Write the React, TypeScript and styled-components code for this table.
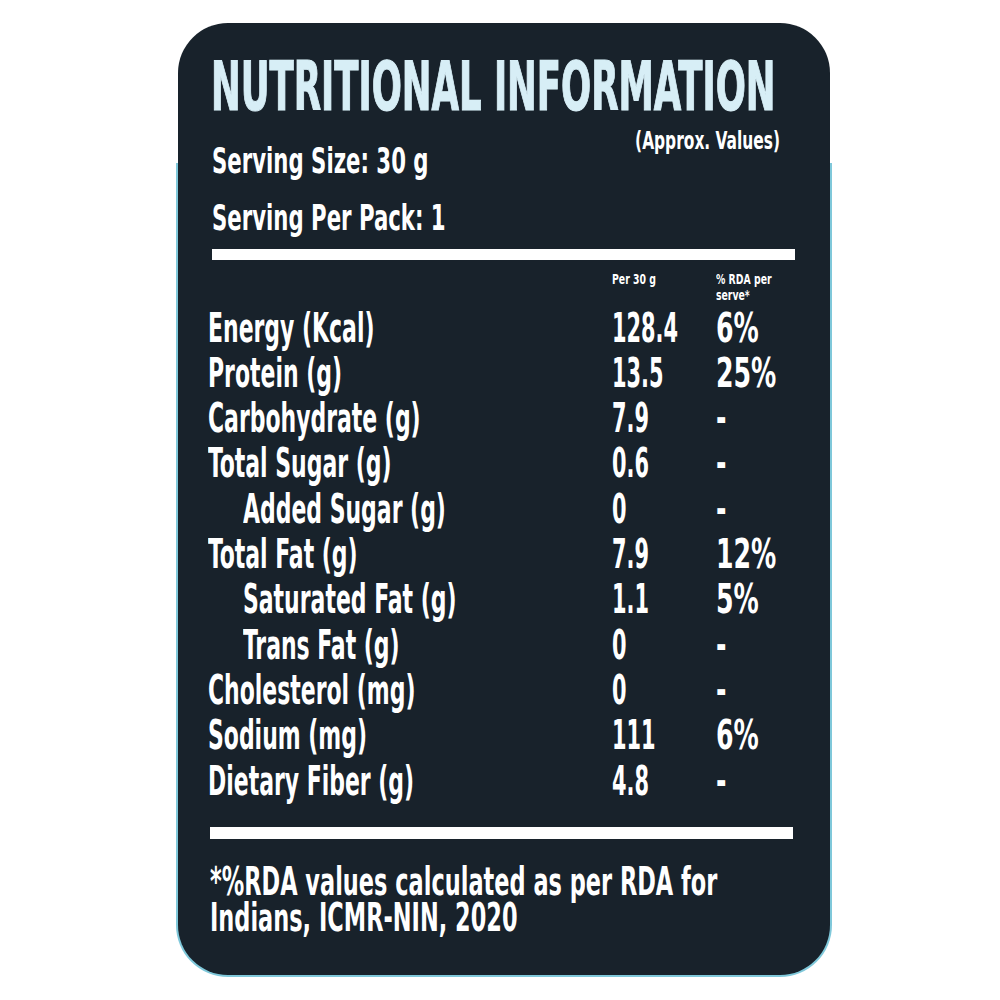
import React from "react";
import styled, {createGlobalStyle} from "styled-components";

const GlobalStyle = createGlobalStyle`
  html, body {
    margin: 0;
    padding: 0;
    background: #ffffff;
  }
`;

type Nutrient = {
    label: string;
    amount: string;
    rda: string;
    indent?: boolean;
};

const nutrients: Nutrient[] = [
    {label: "Energy (Kcal)", amount: "128.4", rda: "6%"},
    {label: "Protein (g)", amount: "13.5", rda: "25%"},
    {label: "Carbohydrate (g)", amount: "7.9", rda: "-"},
    {label: "Total Sugar (g)", amount: "0.6", rda: "-"},
    {label: "Added Sugar (g)", amount: "0", rda: "-", indent: true},
    {label: "Total Fat (g)", amount: "7.9", rda: "12%"},
    {label: "Saturated Fat (g)", amount: "1.1", rda: "5%", indent: true},
    {label: "Trans Fat (g)", amount: "0", rda: "-", indent: true},
    {label: "Cholesterol (mg)", amount: "0", rda: "-"},
    {label: "Sodium (mg)", amount: "111", rda: "6%"},
    {label: "Dietary Fiber (g)", amount: "4.8", rda: "-"},
];

export default function App() {
    return (
        <Page>
            <GlobalStyle />
            <Frame>
                <Card>
                    <Title>NUTRITIONAL INFORMATION</Title>
                    <Header>
                        <Serving>
                            <ServingLine>Serving Size: 30 g</ServingLine>
                            <ServingLine $gap>Serving Per Pack: 1</ServingLine>
                        </Serving>
                        <Approx>(Approx. Values)</Approx>
                    </Header>
                    <Rule $height={11} $inset={4} $right={0} $top={12.6} />
                    <TableHead>
                        <span />
                        <HeadCell>Per 30 g</HeadCell>
                        <HeadCell>% RDA per<br />serve*</HeadCell>
                    </TableHead>
                    <Table>
                        {nutrients.map(n => (
                            <Row key={n.label}>
                                <Label $indent={n.indent}>{n.label}</Label>
                                <Cell $squeeze={0.58}>{n.amount}</Cell>
                                <Cell $squeeze={0.7}>{n.rda}</Cell>
                            </Row>
                        ))}
                    </Table>
                    <Rule $height={12} $inset={2} $right={2} $top={23.4} />
                    <Footnote>
                        <FootLine>*%RDA values calculated as per RDA for</FootLine>
                        <FootLine>Indians, ICMR-NIN, 2020</FootLine>
                    </Footnote>
                </Card>
            </Frame>
        </Page>
    );
}

const condensed = `"DejaVu Sans Condensed", "DejaVu Sans", "Liberation Sans", sans-serif`;

const Page = styled.div`
  width: 1000px;
  height: 1000px;
  box-sizing: border-box;
  padding: 23px 0 0 176px;
`;

const Frame = styled.div`
  width: 656px;
  box-sizing: border-box;
  padding: 0 2px 2px;
  border-radius: 52px;
  background: linear-gradient(to bottom, transparent 140px, #7fc8da 140px);
`;

const Card = styled.div`
  width: 652px;
  height: 952px;
  box-sizing: border-box;
  padding: 30px 35px 0 30px;
  border-radius: 50px;
  background: #18222b;
  color: #ffffff;
  font-family: ${condensed};
  font-weight: 700;
  display: flex;
  flex-direction: column;
  overflow: hidden;
`;

const Title = styled.div`
  margin-left: 3px;
  font-size: 68px;
  line-height: 67px;
  color: #d7eef6;
  -webkit-text-stroke: 1.2px #d7eef6;
  white-space: nowrap;
  transform: scaleX(0.58);
  transform-origin: left center;
`;

const Header = styled.div`
  display: flex;
  justify-content: space-between;
  align-items: flex-start;
`;

const Serving = styled.div`
  margin: 24px 0 0 4px;
  display: flex;
  flex-direction: column;
`;

const ServingLine = styled.div<{ $gap?: boolean }>`
  font-size: 35px;
  line-height: 35px;
  white-space: nowrap;
  margin-top: ${p => (p.$gap ? "22px" : "0")};
  transform: scaleX(0.675);
  transform-origin: left center;
`;

const Approx = styled.div`
  margin: 8.8px 15px 0 0;
  font-size: 24.5px;
  line-height: 24.5px;
  white-space: nowrap;
  transform: scaleX(0.7);
  transform-origin: right center;
`;

const Rule = styled.div<{ $height: number; $inset: number; $right: number; $top: number }>`
  height: ${p => p.$height}px;
  margin: ${p => p.$top}px ${p => p.$right}px 0 ${p => p.$inset}px;
  background: #ffffff;
  flex-shrink: 0;
`;

const columns = `404px 104px 1fr`;

const TableHead = styled.div`
  display: grid;
  grid-template-columns: ${columns};
  margin-top: 11px;
`;

const HeadCell = styled.div`
  font-size: 14px;
  line-height: 16px;
  white-space: nowrap;
  transform: scaleX(0.74);
  transform-origin: left center;
`;

const Table = styled.div`
  margin-top: 3px;
  display: flex;
  flex-direction: column;
`;

const Row = styled.div`
  display: grid;
  grid-template-columns: ${columns};
  height: 45.3px;
  font-size: 40px;
  line-height: 45.3px;
`;

const Label = styled.div<{ $indent?: boolean }>`
  margin-left: ${p => (p.$indent ? "35px" : "0")};
  white-space: nowrap;
  transform: scaleX(0.61);
  transform-origin: left center;
`;

const Cell = styled.div<{ $squeeze: number }>`
  white-space: nowrap;
  transform: scaleX(${p => p.$squeeze});
  transform-origin: left center;
`;

const Footnote = styled.div`
  margin: 24.3px 0 0 2px;
`;

const FootLine = styled.div`
  font-size: 39px;
  line-height: 36px;
  white-space: nowrap;
  transform: scaleX(0.64);
  transform-origin: left center;
`;
